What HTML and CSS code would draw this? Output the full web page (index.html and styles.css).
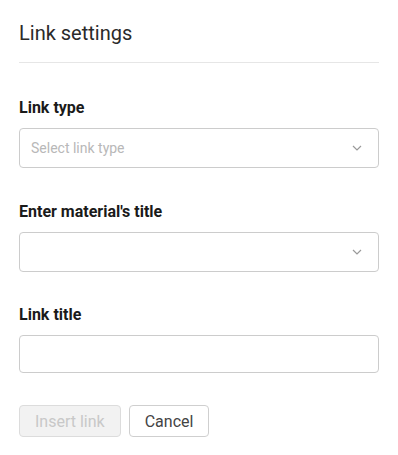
FILE: index.html
```html
<!DOCTYPE html>
<html lang="en">
<head>
  <meta charset="UTF-8">
  <title>Link settings</title>
  <meta name="viewport" content="width=device-width, initial-scale=1.0">
  <link rel="stylesheet" href="styles.css">
</head>
<body>
  <div class="dialog">
    <div class="dialog-header">
      <h2 class="dialog-title">Link settings</h2>
    </div>

    <div class="field field-first">
      <label class="field-label">Link type</label>
      <div class="select">
        <span class="select-placeholder">Select link type</span>
        <svg class="chevron" width="10" height="6" viewBox="0 0 10 6">
          <path d="M1 1 L5 5 L9 1" fill="none" stroke="#9a9a9a" stroke-width="1.2"/>
        </svg>
      </div>
    </div>

    <div class="field">
      <label class="field-label">Enter material's title</label>
      <div class="select">
        <span class="select-placeholder"></span>
        <svg class="chevron" width="10" height="6" viewBox="0 0 10 6">
          <path d="M1 1 L5 5 L9 1" fill="none" stroke="#9a9a9a" stroke-width="1.2"/>
        </svg>
      </div>
    </div>

    <div class="field field-last">
      <label class="field-label">Link title</label>
      <input class="text-input" type="text">
    </div>

    <div class="actions">
      <button class="btn btn-disabled" disabled>Insert link</button>
      <button class="btn">Cancel</button>
    </div>
  </div>
</body>
</html>
```

FILE: styles.css
```css
body {
  margin: 0;
  padding: 0;
  background: #fff;
  font-family: Roboto, 'Liberation Sans', sans-serif;
  color: #1f1f1f;
}
.dialog {
  padding: 21px 19px 0 19px;
}
.dialog-header {
  padding-bottom: 17px;
  border-bottom: 1px solid #e6e6e6;
}
.dialog-title {
  margin: 0;
  font-size: 20px;
  line-height: 24px;
  font-weight: 400;
  color: #2a2a2a;
}
.field {
  margin-top: 34px;
}
.field-first {
  margin-top: 35px;
}
.field-last {
  margin-top: 33px;
}
.field-label {
  display: block;
  font-size: 16px;
  line-height: 20px;
  font-weight: 700;
  color: #1a1a1a;
  margin-bottom: 10px;
}
.select {
  box-sizing: border-box;
  height: 40px;
  border: 1px solid #cccccc;
  border-radius: 4px;
  display: flex;
  align-items: center;
  justify-content: space-between;
  padding: 0 16px 0 11px;
}
.select-placeholder {
  font-size: 14px;
  color: #b8b8b8;
}
.chevron {
  display: block;
}
.text-input {
  display: block;
  box-sizing: border-box;
  width: 100%;
  height: 38px;
  margin: 0;
  border: 1px solid #cccccc;
  border-radius: 4px;
  font-family: inherit;
  font-size: 14px;
  padding: 0 11px;
  outline: none;
}
.actions {
  display: flex;
  gap: 8px;
  margin-top: 32px;
}
.btn {
  box-sizing: border-box;
  height: 32px;
  padding: 0 15px;
  border: 1px solid #cfcfcf;
  border-radius: 4px;
  background: #fff;
  font-family: inherit;
  font-size: 16px;
  color: #444;
}
.btn-disabled {
  background: #f2f2f2;
  border-color: #dcdcdc;
  color: #c8c8c8;
}
```
